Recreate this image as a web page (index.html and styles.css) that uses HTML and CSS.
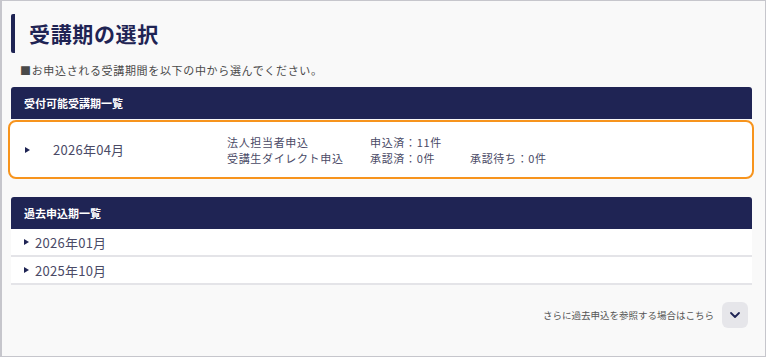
FILE: index.html
```html
<!DOCTYPE html>
<html lang="ja">
<head>
  <meta charset="UTF-8">
  <title>受講期の選択</title>
  <link rel="stylesheet" href="styles.css">
</head>
<body>
  <div class="frame">
    <h1 class="page-title">受講期の選択</h1>
    <p class="lead">■お申込される受講期間を以下の中から選んでください。</p>

    <!-- 受付可能 -->
    <div class="panel">
      <div class="panel-head">受付可能受講期一覧</div>
      <div class="term-card">
        <span class="tri"></span>
        <span class="term-date">2026年04月</span>
        <div class="term-col kinds">
          <span>法人担当者申込</span>
          <span>受講生ダイレクト申込</span>
        </div>
        <div class="term-col counts">
          <span>申込済：11件</span>
          <span>承認済：0件</span>
        </div>
        <div class="term-col waits">
          <span>&nbsp;</span>
          <span>承認待ち：0件</span>
        </div>
      </div>
    </div>

    <!-- 過去 -->
    <div class="panel past">
      <div class="panel-head">過去申込期一覧</div>
      <div class="past-row"><span class="tri"></span>2026年01月</div>
      <div class="past-row"><span class="tri"></span>2025年10月</div>
    </div>

    <div class="more">
      <span>さらに過去申込を参照する場合はこちら</span>
      <button class="more-btn" type="button">
        <svg width="12" height="8" viewBox="0 0 12 8"><path d="M2 2 L6 6 L10 2" fill="none" stroke="#1f2454" stroke-width="1.8" stroke-linecap="round" stroke-linejoin="round"/></svg>
      </button>
    </div>
  </div>
</body>
</html>
```

FILE: styles.css
```css
* {
  box-sizing: border-box;
}

body {
  margin: 0;
  font-family: "Noto Sans CJK JP", "Noto Sans", sans-serif;
  background: #fff;
}

.frame {
  width: 766px;
  height: 357px;
  border: 1px solid #c6c6cc;
  border-left-width: 2px;
  background-color: #f9f9f9;
  padding: 13px 13px 0 9px;
  overflow: hidden;
}

.page-title {
  margin: 0;
  height: 39px;
  border-left: 4px solid #1f2454;
  border-radius: 2px;
  padding-left: 14px;
  font-size: 21px;
  font-weight: 700;
  letter-spacing: 0.03em;
  line-height: 39px;
  color: #1f2454;
}

.lead {
  margin: 9px 0 0 9px;
  font-size: 11px;
  letter-spacing: 0.06em;
  line-height: 16px;
  color: #4a4a4a;
}

.panel {
  margin-top: 9px;
}

.panel-head {
  height: 32px;
  padding-left: 13px;
  background-color: #1f2454;
  border-radius: 3px 3px 0 0;
  color: #fff;
  font-size: 11px;
  font-weight: 700;
  line-height: 32px;
}

.tri {
  display: inline-block;
  width: 0;
  height: 0;
  border-top: 3px solid transparent;
  border-bottom: 3px solid transparent;
  border-left: 5px solid #1f2454;
}

.term-card {
  display: flex;
  align-items: center;
  margin: 1px -2px 0 -3px;
  height: 59px;
  background: #fff;
  border: 2px solid #f7941d;
  border-radius: 8px;
  padding-left: 15px;
  font-size: 11px;
  letter-spacing: 0.06em;
  color: #4a4a66;
}

.term-date {
  margin-left: 23px;
  width: 174px;
  font-size: 13px;
  letter-spacing: 0.02em;
}

.term-col {
  display: flex;
  flex-direction: column;
  line-height: 16px;
  margin-top: 1px;
}

.kinds {
  width: 143px;
}

.counts {
  width: 100px;
}

.past {
  margin-top: 18px;
}

.past-row {
  display: flex;
  align-items: center;
  gap: 6px;
  height: 28px;
  padding-left: 13px;
  background: #fff;
  border-bottom: 2px solid #e4e4e8;
  font-size: 13px;
  letter-spacing: 0.02em;
  color: #4a4a66;
}

.more {
  display: flex;
  justify-content: flex-end;
  align-items: center;
  gap: 8px;
  margin-top: 17px;
  padding-right: 4px;
  font-size: 9.5px;
  color: #555;
}

.more-btn {
  width: 26px;
  height: 26px;
  border: none;
  border-radius: 6px;
  background: #e6e6ea;
  display: flex;
  align-items: center;
  justify-content: center;
  padding: 0;
}
```
